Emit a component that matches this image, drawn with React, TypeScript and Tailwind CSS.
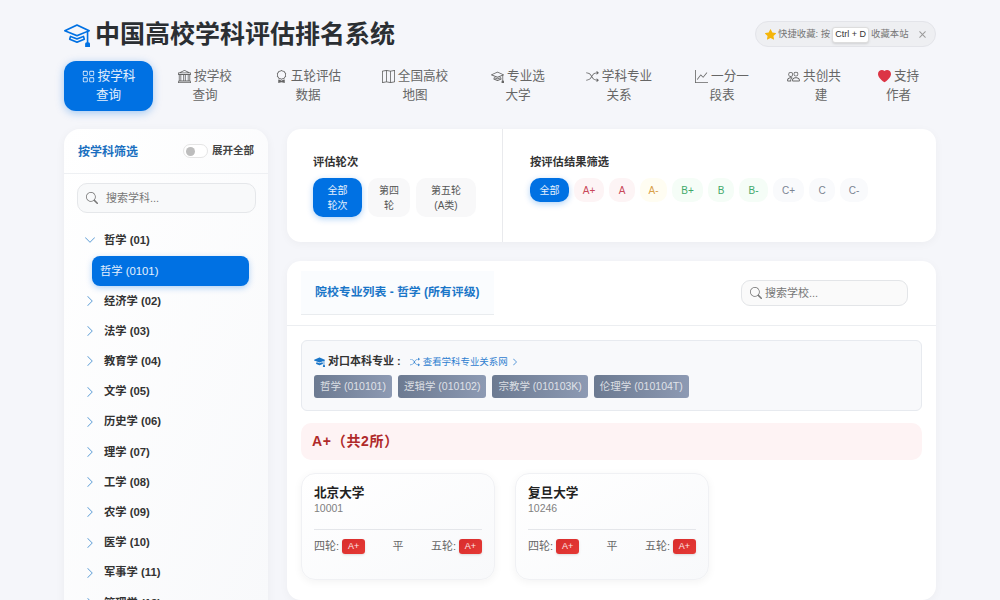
import React from "react";
import { BsMortarboard, BsMortarboardFill, BsGrid, BsBank, BsAward, BsMap, BsShuffle, BsGraphUp, BsPeople, BsHeartFill, BsStarFill, BsSearch, BsChevronDown, BsChevronRight, BsX } from "react-icons/bs";

const nav = [
  { a: "按学科", b: "查询", I: BsGrid, w: "w-[89px]", active: true },
  { a: "按学校", b: "查询", I: BsBank, w: "w-[104px]" },
  { a: "五轮评估", b: "数据", I: BsAward, w: "w-[102px]" },
  { a: "全国高校", b: "地图", I: BsMap, w: "w-[112px]" },
  { a: "专业选", b: "大学", I: BsMortarboard, w: "w-[94px]" },
  { a: "学科专业", b: "关系", I: BsShuffle, w: "w-[108px]" },
  { a: "一分一", b: "段表", I: BsGraphUp, w: "w-[98px]" },
  { a: "共创共", b: "建", I: BsPeople, w: "w-[100px]", shift: true },
  { a: "支持", b: "作者", I: BsHeartFill, w: "w-[55px]", red: true },
];

const tree = ["经济学 (02)", "法学 (03)", "教育学 (04)", "文学 (05)", "历史学 (06)", "理学 (07)", "工学 (08)", "农学 (09)", "医学 (10)", "军事学 (11)", "管理学 (12)"];

const pills = [
  { t: "A+", c: "w-[30px] bg-[#fdf4f5] text-[#c9485a]" },
  { t: "A", c: "w-[26px] bg-[#fdf4f5] text-[#c9485a]" },
  { t: "A-", c: "w-[27px] bg-[#fffdf2] text-[#d9a04a]" },
  { t: "B+", c: "w-[31px] bg-[#f5fdf7] text-[#3fa86a]" },
  { t: "B", c: "w-[26px] bg-[#f5fdf7] text-[#3fa86a]" },
  { t: "B-", c: "w-[29px] bg-[#f5fdf7] text-[#3fa86a]" },
  { t: "C+", c: "w-[31px] bg-[#f9fafc] text-[#7c8593]" },
  { t: "C", c: "w-[26px] bg-[#f9fafc] text-[#7c8593]" },
  { t: "C-", c: "w-[28px] bg-[#f9fafc] text-[#7c8593]" },
];

const tags = ["哲学 (010101)", "逻辑学 (010102)", "宗教学 (010103K)", "伦理学 (010104T)"];

function Badge() {
  return <span className="inline-flex h-[15px] w-[23px] items-center justify-center rounded-[3px] bg-gradient-to-br from-[#d92d2d] to-[#e53935] text-[9px] text-white/90 shadow-sm">A+</span>;
}

function SchoolCard({ name, code }: { name: string; code: string }) {
  return (
    <div className="h-[107px] w-[194px] rounded-[14px] border border-[#f0f1f4] bg-gradient-to-br from-white to-[#f8f9fb] px-[12px] pt-[11px] shadow-[0_2px_8px_rgba(0,0,0,0.05)]">
      <div className="text-[12.6px] font-bold leading-[16px] text-[#222]">{name}</div>
      <div className="text-[10.5px] leading-[14px] text-[#808080]">{code}</div>
      <div className="mt-[14px] border-t border-[#e4e6ea] pt-[9px]">
        <div className="flex items-center justify-between text-[11px] leading-[15px] text-[#666]">
          <span className="flex items-center gap-[3px]">四轮: <Badge /></span>
          <span>平</span>
          <span className="flex items-center gap-[3px]">五轮: <Badge /></span>
        </div>
      </div>
    </div>
  );
}

export default function App() {
  return (
    <div className="h-screen overflow-hidden bg-[#f5f6fa] px-[64px] font-['Liberation_Sans','Noto_Sans_CJK_SC',sans-serif] text-[#333]">
      <header className="flex h-[61px] items-start justify-between">
        <div className="mt-[20px] flex items-center gap-[5px]">
          <BsMortarboard className="h-[26px] w-[26px] text-[#0071e3]" />
          <h1 className="text-[25px] font-bold leading-[28px] text-[#2b2f33]">中国高校学科评估排名系统</h1>
        </div>
        <div className="mt-[21px] flex h-[26px] w-[181px] items-center rounded-full border border-[#e3e4e9] bg-[#eeeff2] pl-[9px] text-[9.4px] text-[#777]">
          <BsStarFill className="mr-[2px] h-[11px] w-[11px] text-[#f5b50a]" />
          <span>快捷收藏: 按</span>
          <span className="mx-[2px] mt-[1px] flex h-[16px] w-[37px] items-center justify-center rounded-[3px] border border-[#ddd] bg-white text-[9px] text-[#333] shadow-sm">Ctrl + D</span>
          <span>收藏本站</span>
          <BsX className="ml-[6px] h-[15px] w-[15px] text-[#999]" />
        </div>
      </header>

      <nav className="flex h-[50px] items-stretch">
        {nav.map(({ a, b, I, w, active, red, shift }) => (
          <div key={a + b} className={`${w} flex flex-col items-center justify-center text-[12.6px] leading-[19px] ${active ? "rounded-[12px] bg-[#0071e3] text-white/90 shadow-[0_2px_8px_rgba(0,113,227,0.35)]" : "text-[#666]"}`}>
            <span className={`flex items-center gap-[3px] ${shift ? "pr-[14px]" : ""}`}>
              <I className={red ? "h-[13px] w-[13px] text-[#dc3545]" : "h-[13px] w-[13px]"} />
              {a}
            </span>
            <span>{b}</span>
          </div>
        ))}
      </nav>

      <div className="mt-[18px] flex items-start gap-[19px]">
        <aside className="w-[204px] shrink-0 rounded-[16px] bg-gradient-to-br from-white to-[#f8f9fb] shadow-[0_2px_10px_rgba(0,0,0,0.05)]">
          <div className="flex h-[45px] items-center justify-between border-b border-[#eef0f3] pl-[14px] pr-[14px]">
            <span className="pt-[2px] text-[12px] font-bold text-[#1a6fc0]">按学科筛选</span>
            <span className="flex items-center gap-[4px] text-[10.5px] font-bold text-[#444]">
              <span className="flex h-[14px] w-[25px] items-center rounded-full border border-[#e5e5e5] bg-white pl-[2px]">
                <span className="h-[9px] w-[9px] rounded-full bg-[#bdbdbd]" />
              </span>
              展开全部
            </span>
          </div>
          <div className="px-[13px] pt-[9px]">
            <div className="flex h-[30px] w-[179px] items-center rounded-[10px] border border-[#e5e7ea] bg-[#f8f9fa] pl-[8px] text-[11px] text-[#777]">
              <BsSearch className="mr-[8px] h-[12px] w-[12px] text-[#777]" />
              搜索学科...
            </div>
            <div className="mt-[12px]">
              <div className="mb-[1px] flex h-[30px] items-center pl-[7px] text-[11.3px] font-bold text-[#333]">
                <BsChevronDown className="mr-[8px] h-[12px] w-[12px] text-[#5b9bd5]" />
                哲学 (01)
              </div>
              <div className="ml-[15px] flex h-[30px] w-[157px] items-center rounded-[8px] bg-[#0071e3] pl-[8px] text-[11.3px] text-white/90 shadow-[0_2px_6px_rgba(0,113,227,0.3)]">哲学 (0101)</div>
              {tree.map((t) => (
                <div key={t} className="flex h-[30.2px] items-center pl-[7px] text-[11.3px] font-bold text-[#333]">
                  <BsChevronRight className="mr-[8px] h-[12px] w-[12px] text-[#5b9bd5]" />
                  {t}
                </div>
              ))}
            </div>
          </div>
        </aside>

        <main className="w-[649px] shrink-0">
          <section className="flex h-[113px] rounded-[14px] bg-white shadow-[0_2px_10px_rgba(0,0,0,0.04)]">
            <div className="w-[216px] border-r border-[#e9eaed] pl-[26px] pt-[26px]">
              <div className="text-[11.3px] font-bold leading-[15px] text-[#333]">评估轮次</div>
              <div className="mt-[8px] flex gap-[6px] text-center text-[10px] leading-[15px]">
                <div className="flex h-[39px] w-[49px] items-center justify-center rounded-[10px] bg-[#0071e3] text-white/90 shadow-[0_2px_6px_rgba(0,113,227,0.3)]">全部<br />轮次</div>
                <div className="flex h-[39px] w-[42px] items-center justify-center rounded-[10px] bg-[#f8f8f9] text-[#555]">第四<br />轮</div>
                <div className="flex h-[39px] w-[60px] items-center justify-center rounded-[10px] bg-[#f8f8f9] text-[#555]">第五轮<br />(A类)</div>
              </div>
            </div>
            <div className="pl-[27px] pt-[26px]">
              <div className="text-[11.3px] font-bold leading-[15px] text-[#333]">按评估结果筛选</div>
              <div className="mt-[8px] flex gap-[5px] text-[10px]">
                <div className="flex h-[24px] w-[39px] items-center justify-center rounded-[10px] bg-[#0071e3] text-white/90 shadow-[0_2px_6px_rgba(0,113,227,0.3)]">全部</div>
                {pills.map((p) => (
                  <div key={p.t} className={`flex h-[24px] items-center justify-center rounded-[10px] ${p.c}`}>{p.t}</div>
                ))}
              </div>
            </div>
          </section>

          <section className="mt-[19px] rounded-[14px] bg-white pb-[20px] shadow-[0_2px_10px_rgba(0,0,0,0.04)]">
            <div className="flex h-[65px] items-start justify-between border-b border-[#eceef1] pl-[14px] pr-[28px] pt-[10px]">
              <div className="flex h-[44px] w-[193px] items-center border-b border-[#e9ecef] bg-[#fafcfe] pl-[14px] text-[11.9px] font-bold text-[#1a76c8]">院校专业列表 - 哲学 (所有评级)</div>
              <div className="mt-[9px] flex h-[26px] w-[167px] items-center rounded-[9px] border border-[#e3e5e8] bg-[#fafafa] pl-[8px] text-[11px] text-[#777]">
                <BsSearch className="mr-[3px] h-[12px] w-[12px] text-[#777]" />
                搜索学校...
              </div>
            </div>
            <div className="px-[14px] pt-[14px]">
              <div className="h-[71px] rounded-[6px] border border-[#e7eaef] bg-[#f8f9fb] px-[12px] pt-[13px]">
                <div className="flex h-[15px] items-center text-[11px] leading-[15px]">
                  <BsMortarboardFill className="mr-[3px] h-[11px] w-[11px] text-[#1a76c8]" />
                  <span className="mr-[9px] font-bold text-[#333]">对口本科专业 :</span>
                  <span className="flex items-center text-[9.45px] text-[#2f80d0]">
                    <BsShuffle className="mr-[3px] h-[10px] w-[10px]" />
                    查看学科专业关系网
                    <BsChevronRight className="ml-[3px] h-[8px] w-[8px]" />
                  </span>
                </div>
                <div className="mt-[6px] flex gap-[6px]">
                  {tags.map((t) => (
                    <span key={t} className="flex h-[23px] items-center rounded-[3px] bg-gradient-to-r from-[#6c7a91] to-[#8d9ab3] px-[6px] text-[10.5px] text-white/75">{t}</span>
                  ))}
                </div>
              </div>
              <div className="mt-[12px] flex h-[37px] items-center rounded-[10px] bg-[#fef3f4] pl-[11px] text-[14px] font-bold tracking-[0.7px] text-[#b02a2a]">A+（共2所）</div>
              <div className="mt-[13px] flex gap-[20px]">
                <SchoolCard name="北京大学" code="10001" />
                <SchoolCard name="复旦大学" code="10246" />
              </div>
            </div>
          </section>
        </main>
      </div>
    </div>
  );
}
